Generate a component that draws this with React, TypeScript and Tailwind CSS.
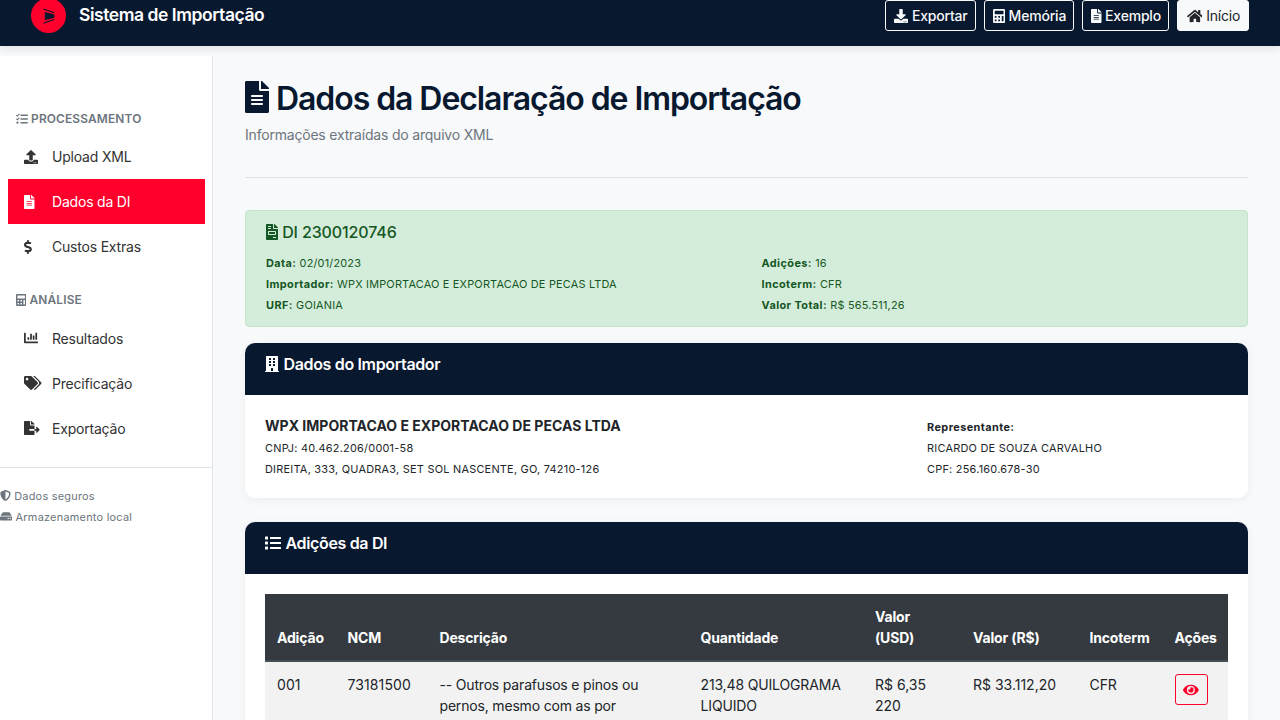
import React from "react";
import {
  FaDownload, FaCalculator, FaFileAlt, FaHome, FaTasks, FaUpload, FaDollarSign, FaChartBar,
  FaTags, FaFileExport, FaShieldAlt, FaHdd, FaFileInvoice, FaBuilding, FaList, FaEye,
} from "react-icons/fa";

type Icon = React.ComponentType<{ className?: string }>;

const widths = new Map<Icon, string>([
  [FaCalculator, "w-[0.875em]"],
  [FaBuilding, "w-[0.875em]"],
  [FaFileAlt, "w-[0.75em]"],
  [FaFileInvoice, "w-[0.75em]"],
  [FaHome, "w-[1.125em]"],
  [FaFileExport, "w-[1.125em]"],
  [FaHdd, "w-[1.125em]"],
  [FaEye, "w-[1.125em]"],
  [FaDollarSign, "w-[0.5625em]"],
  [FaTags, "w-[1.25em]"],
]);

const actions: { icon: Icon; label: string; width: string; solid?: boolean }[] = [
  { icon: FaDownload, label: "Exportar", width: "w-[91px]" },
  { icon: FaCalculator, label: "Memória", width: "w-[90px]" },
  { icon: FaFileAlt, label: "Exemplo", width: "w-[87px]" },
  { icon: FaHome, label: "Início", width: "w-[72px]", solid: true },
];

function Ico({ icon: I, align = "align-[-0.125em]" }: { icon: Icon; align?: string }) {
  return <I className={`inline-block h-[1em] ${widths.get(I) ?? "w-[1em]"} ${align}`} />;
}

function NavHeading({ icon, children }: { icon: Icon; children: React.ReactNode }) {
  return (
    <h6 className="px-4 text-[11.9px] leading-[14.3px] font-semibold tracking-[0.16px] text-[#6c757d] whitespace-nowrap">
      <Ico icon={icon} /> {children}
    </h6>
  );
}

function NavItem({ icon, label, active }: { icon: Icon; label: string; active?: boolean }) {
  return (
    <a className={`ml-2 flex h-[45px] w-[197px] items-center px-4 ${active ? "bg-[#ff002d] text-white" : "text-[#333]"}`}>
      <span className="w-7 shrink-0"><Ico icon={icon} /></span>
      <span>{label}</span>
    </a>
  );
}

function CardHeader({ icon, children }: { icon: Icon; children: React.ReactNode }) {
  return (
    <div className="h-[52px] rounded-t-[10px] bg-[#08182f] px-5 pt-3 text-[16px] leading-[19px] font-semibold tracking-[-0.34px] text-white">
      <Ico icon={icon} />
      <span className="ml-[4.5px]">{children}</span>
    </div>
  );
}

function SmallLine({ children }: { children: React.ReactNode }) {
  return (
    <div className="h-[21px] whitespace-nowrap">
      <small className="text-[10.9px] leading-none tracking-[0.25px]">{children}</small>
    </div>
  );
}

function Field({ name, value }: { name: string; value: string }) {
  return (
    <div className="tracking-[0.2px]">
      <b className="tracking-[0.42px]">{name}:</b> {value}
    </div>
  );
}

const headers = ["Adição", "NCM", "Descrição", "Quantidade", "Valor (USD)", "Valor (R$)", "Incoterm", "Ações"];

export default function App() {
  return (
    <div className="flex h-[720px] w-[1280px] flex-col overflow-hidden bg-[#f8f9fb] font-['Inter',sans-serif] text-[14px] leading-[21px] tracking-[-0.2px] text-[#212529]">
      <header className="z-10 flex h-[46px] shrink-0 items-start justify-between bg-[#08182f] px-[31px] shadow-[0_2px_10px_rgba(0,0,0,0.1)]">
        <div className="flex items-start">
          <div className="-mt-[2px] flex size-[35px] items-center justify-center rounded-full bg-[#ff002d]">
            <svg viewBox="0 0 12 16" className="h-4 w-3 fill-[#08182f]">
              <path d="M1.8 3.9 11.3 6.4v3.4L1.8 12.3Z" />
              <path d="M.6.4 11.3 4.2v1.1L.6 1.8Z" />
              <path d="M.6 15.8 11.3 12.1V11L.6 14.4Z" />
            </svg>
          </div>
          <span className="ml-[13px] pt-[2px] text-[17.5px] leading-[26px] font-semibold tracking-[-0.45px] text-white">
            Sistema de Importação
          </span>
        </div>
        <div className="flex gap-2">
          {actions.map((a) => (
            <button
              key={a.label}
              className={`h-[31px] rounded-[3px] border pl-px text-[14px] leading-[21px] tracking-[-0.2px] whitespace-nowrap ${a.width} ${
                a.solid ? "border-[#f8f9fa] bg-[#f8f9fa] text-[#212529]" : "border-[#f8f9fa] font-medium text-[#f8f9fa]"
              }`}
            >
              <Ico icon={a.icon} /> {a.label}
            </button>
          ))}
        </div>
      </header>
      <div className="flex min-h-0 flex-1">
        <aside className="mt-[10px] w-[213px] shrink-0 border-r border-[#dee2e6] bg-white pt-[56px]">
          <NavHeading icon={FaTasks}>PROCESSAMENTO</NavHeading>
          <nav className="pt-2">
            <NavItem icon={FaUpload} label="Upload XML" />
            <NavItem icon={FaFileAlt} label="Dados da DI" active />
            <NavItem icon={FaDollarSign} label="Custos Extras" />
          </nav>
          <div className="h-6" />
          <NavHeading icon={FaCalculator}>ANÁLISE</NavHeading>
          <nav className="pt-2">
            <NavItem icon={FaChartBar} label="Resultados" />
            <NavItem icon={FaTags} label="Precificação" />
            <NavItem icon={FaFileExport} label="Exportação" />
          </nav>
          <div className="mt-4 border-t border-[#dee2e6] pt-4 text-[#6c757d]">
            <SmallLine><Ico icon={FaShieldAlt} /> Dados seguros</SmallLine>
            <SmallLine><Ico icon={FaHdd} /> Armazenamento local</SmallLine>
          </div>
        </aside>
        <main className="flex min-w-0 flex-1 flex-col px-8 pt-[34px]">
          <h1 className="text-[32px] leading-[38px] font-semibold tracking-[-1.07px] text-[#08182f]">
            <Ico icon={FaFileAlt} align="align-[-0.09em]" />
            <span className="ml-[7px]">Dados da Declaração de Importação</span>
          </h1>
          <p className="mt-[6px] text-[#6c757d]">Informações extraídas do arquivo XML</p>
          <div className="mt-8 h-px shrink-0 bg-[#dee2e6]" />
          <section className="mt-8 h-[117px] shrink-0 rounded-[4px] border border-[#c3e6cb] bg-[#d4edda] px-5 pt-3 text-[#155724]">
            <h5 className="text-[16px] leading-[19px] font-medium tracking-[-0.12px]">
              <Ico icon={FaFileInvoice} /> DI 2300120746
            </h5>
            <div className="mt-[11px] grid grid-cols-2 gap-x-[30px] text-[10.9px]">
              <div>
                <Field name="Data" value="02/01/2023" />
                <Field name="Importador" value="WPX IMPORTACAO E EXPORTACAO DE PECAS LTDA" />
                <Field name="URF" value="GOIANIA" />
              </div>
              <div>
                <Field name="Adições" value="16" />
                <Field name="Incoterm" value="CFR" />
                <Field name="Valor Total" value="R$ 565.511,26" />
              </div>
            </div>
          </section>
          <section className="mt-4 h-[155px] shrink-0 rounded-[10px] bg-white shadow-[0_2px_10px_rgba(0,0,0,0.05)]">
            <CardHeader icon={FaBuilding}>Dados do Importador</CardHeader>
            <div className="flex px-5 pt-5">
              <div className="w-[662px]">
                <div className="font-bold tracking-[0.02px]">WPX IMPORTACAO E EXPORTACAO DE PECAS LTDA</div>
                <SmallLine>CNPJ: 40.462.206/0001-58</SmallLine>
                <SmallLine>DIREITA, 333, QUADRA3, SET SOL NASCENTE, GO, 74210-126</SmallLine>
              </div>
              <div>
                <SmallLine><b className="tracking-[0.42px]">Representante:</b></SmallLine>
                <SmallLine>RICARDO DE SOUZA CARVALHO</SmallLine>
                <SmallLine>CPF: 256.160.678-30</SmallLine>
              </div>
            </div>
          </section>
          <section className="mt-6 h-[400px] shrink-0 rounded-[10px] bg-white shadow-[0_2px_10px_rgba(0,0,0,0.05)]">
            <CardHeader icon={FaList}>Adições da DI</CardHeader>
            <div className="p-5">
              <table className="w-full table-fixed border-separate border-spacing-0 text-left">
                <colgroup>
                  <col className="w-[70.5px]" /><col className="w-[92px]" /><col className="w-[261px]" /><col className="w-[174.5px]" />
                  <col className="w-[98px]" /><col className="w-[116.5px]" /><col className="w-[85px]" /><col />
                </colgroup>
                <thead>
                  <tr className="bg-[#343a40] text-white">
                    {headers.map((h) => (
                      <th key={h} className="border-b-2 border-[#454d55] px-3 py-3 align-bottom font-bold tracking-[-0.17px]">{h}</th>
                    ))}
                  </tr>
                </thead>
                <tbody>
                  <tr className="bg-[#f2f2f2] align-top">
                    <td className="p-3 tracking-[0.1px]">001</td>
                    <td className="p-3 tracking-[0.1px]">73181500</td>
                    <td className="p-3 tracking-[-0.18px]">-- Outros parafusos e pinos ou<br />pernos, mesmo com as por</td>
                    <td className="p-3 tracking-[-0.15px]">213,48 QUILOGRAMA LIQUIDO</td>
                    <td className="p-3 tracking-normal">R$ 6,35 220</td>
                    <td className="p-3 tracking-normal whitespace-nowrap">R$ 33.112,20</td>
                    <td className="p-3 tracking-[-0.1px]">CFR</td>
                    <td className="p-3">
                      <button className="block h-[31px] w-[33px] rounded-[3px] border border-[#ff002d] text-[#ff002d]">
                        <Ico icon={FaEye} />
                      </button>
                    </td>
                  </tr>
                </tbody>
              </table>
            </div>
          </section>
        </main>
      </div>
    </div>
  );
}
